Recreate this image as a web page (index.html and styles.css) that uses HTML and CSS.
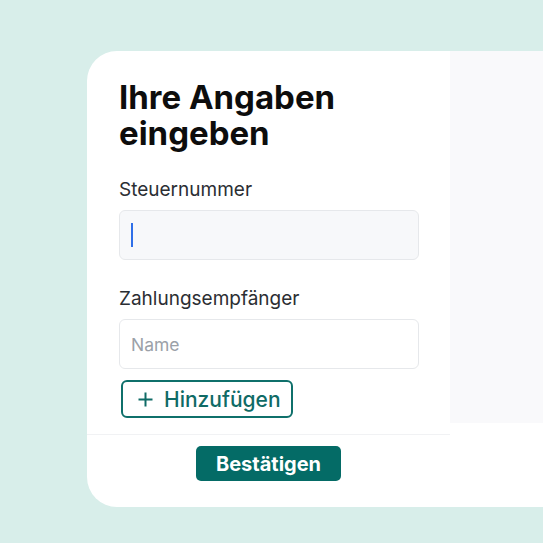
FILE: index.html
```html
<!DOCTYPE html>
<html lang="de">
<head>
<meta charset="utf-8">
<link rel="stylesheet" href="styles.css">
</head>
<body>
<div class="card">
  <div class="main">
    <form class="form">
      <h1 class="title">Ihre Angaben eingeben</h1>
      <label class="label">Steuernummer</label>
      <div class="input input-active"><span class="caret"></span></div>
      <label class="label label-2">Zahlungsempfänger</label>
      <div class="input"><span class="placeholder">Name</span></div>
      <button type="button" class="add"><svg class="plus" width="15" height="15" viewBox="0 0 15 15"><path d="M7.5 0.5v14M0.5 7.5h14" stroke="currentColor" stroke-width="2" fill="none"/></svg>Hinzufügen</button>
    </form>
    <div class="footer">
      <button type="button" class="confirm">Bestätigen</button>
    </div>
  </div>
  <div class="side"></div>
</div>
</body>
</html>
```
FILE: styles.css
```css
html, body {
  margin: 0;
  padding: 0;
}
body {
  background: #d8eeea;
  width: 543px;
  height: 543px;
  overflow: hidden;
  font-family: Inter, "Noto Sans", sans-serif;
  color: #1f2328;
}
.card {
  margin: 51px 0 0 87px;
  width: 470px;
  height: 456px;
  background: #fff;
  border-radius: 30px 0 0 30px;
  overflow: hidden;
  display: grid;
  grid-template-columns: 363px 1fr;
  align-items: start;
}
.main {
  display: flex;
  flex-direction: column;
}
.form {
  display: flex;
  flex-direction: column;
  align-items: flex-start;
  padding: 28px 0 16px 32px;
}
.title {
  margin: 0 0 28px;
  font-size: 33px;
  line-height: 36px;
  font-weight: 700;
  color: #0d0d0d;
  width: 280px;
}
.label {
  font-size: 19px;
  line-height: 22px;
  color: #2b2e33;
  margin-bottom: 9px;
}
.label-2 {
  margin-top: 28px;
}
.input {
  box-sizing: border-box;
  width: 300px;
  height: 50px;
  border: 1.5px solid #e6e8eb;
  border-radius: 6px;
  background: #fff;
  display: flex;
  align-items: center;
  padding-left: 11px;
}
.input-active {
  background: #f7f8fa;
}
.caret {
  width: 2px;
  height: 24px;
  background: #2f6fe8;
}
.placeholder {
  font-size: 17.5px;
  color: #9ba1a8;
}
.add {
  margin: 11px 0 0 2px;
  box-sizing: border-box;
  height: 38px;
  padding: 0 10px 0 15px;
  border: 2px solid #0f706b;
  border-radius: 6px;
  background: #fff;
  color: #0f6b66;
  font-family: inherit;
  font-size: 21px;
  font-weight: 500;
  display: flex;
  align-items: center;
  gap: 11px;
}
.plus {
  display: block;
}
.footer {
  border-top: 1px solid #f1f2f4;
  display: flex;
  justify-content: center;
  padding-top: 11px;
}
.confirm {
  height: 35px;
  padding: 0 20px;
  border: none;
  border-radius: 5px;
  background: #046b66;
  color: #fff;
  font-family: inherit;
  font-size: 20px;
  font-weight: 700;
}
.side {
  background: #f9f9fb;
  height: 372px;
}
```
